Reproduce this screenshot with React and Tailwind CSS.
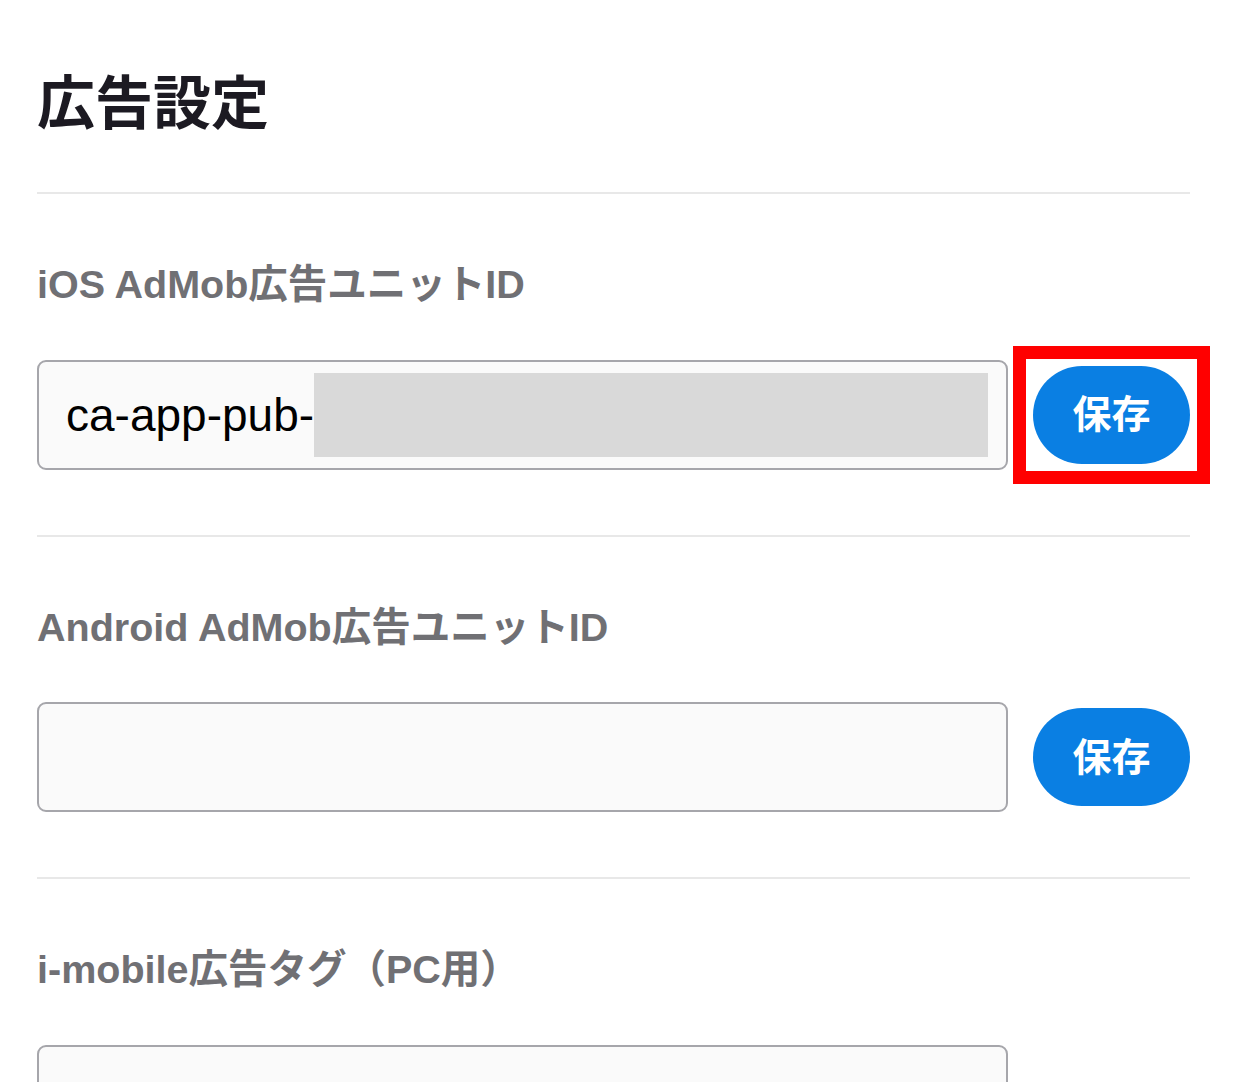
import React from "react";

const FONT = { fontFamily: '"Liberation Sans", "Noto Sans CJK JP", sans-serif' };

function SaveButton({ highlighted }) {
  return (
    <div className="relative shrink-0">
      <button className="flex h-[98px] w-[157px] items-center justify-center rounded-full bg-[#0a7fe3] text-[39px] font-bold leading-none text-white">
        保存
      </button>
      {highlighted && (
        <div className="pointer-events-none absolute -inset-[20px] border-[13px] border-[#ff0000]" />
      )}
    </div>
  );
}

function Section({ label, value, redacted, highlighted, noButton, tall }) {
  return (
    <div>
      <div className="h-[2px] bg-[#e8e8e8]" />
      <div className="mt-[71px] text-[39.5px] font-bold leading-none text-[#707074]">{label}</div>
      <div className="mt-[55px] flex items-center gap-[25px]">
        <div
          className={
            tall
              ? "flex h-[160px] w-[971px] items-start rounded-[9px] border-2 border-[#a6a6ab] bg-[#fafafa] pl-[27px] pr-[18px]"
              : "flex h-[110px] w-[971px] items-center rounded-[9px] border-2 border-[#a6a6ab] bg-[#fafafa] pl-[27px] pr-[18px]"
          }
        >
          {value && <span className="text-[46px] leading-none text-black">{value}</span>}
          {redacted && <div className="h-[84px] flex-1 bg-[#d9d9d9]" />}
        </div>
        {!noButton && <SaveButton highlighted={highlighted} />}
      </div>
      {!noButton && <div className="h-[65px]" />}
    </div>
  );
}

export default function App() {
  return (
    <div className="h-[1082px] overflow-hidden bg-white pl-[37px] pr-[50px]" style={FONT}>
      <h1 className="pt-[75px] text-[58px] font-bold leading-none text-[#1c1a22]">広告設定</h1>
      <div className="mt-[59px]">
        <Section label="iOS AdMob広告ユニットID" value="ca-app-pub-" redacted highlighted />
        <Section label="Android AdMob広告ユニットID" />
        <Section label="i-mobile広告タグ（PC用）" noButton tall />
      </div>
    </div>
  );
}
